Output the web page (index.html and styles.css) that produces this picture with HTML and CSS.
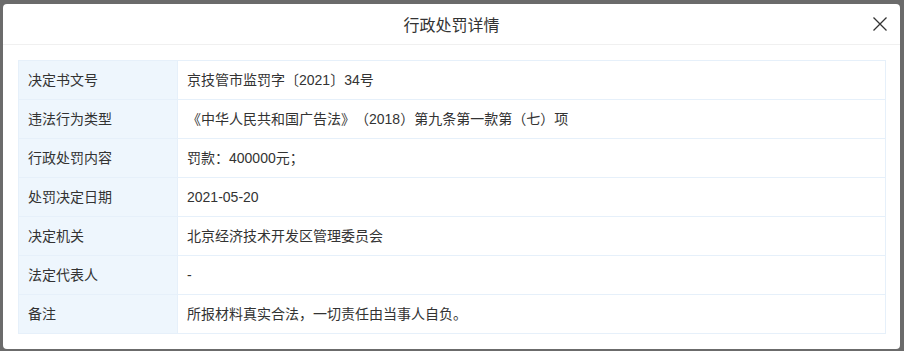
FILE: index.html
```html
<!DOCTYPE html>
<html lang="zh-CN">
<head>
    <meta charset="UTF-8">
    <meta name="viewport" content="width=device-width, initial-scale=1.0">
    <title>行政处罚详情</title>
    <link rel="stylesheet" href="styles.css">
</head>
<body>
    <div class="modal">
        <div class="modal-header">
            <span class="modal-title">行政处罚详情</span>
            <button class="modal-close" aria-label="关闭">
                <svg width="16" height="16" viewBox="0 0 16 16">
                    <path d="M1.5 1.5 L14.5 14.5 M14.5 1.5 L1.5 14.5" stroke="#333" stroke-width="1.3" fill="none"/>
                </svg>
            </button>
        </div>
        <div class="modal-body">
            <table class="detail-table">
                <tr>
                    <td class="label">决定书文号</td>
                    <td>京技管市监罚字〔2021〕34号</td>
                </tr>
                <tr>
                    <td class="label">违法行为类型</td>
                    <td>《中华人民共和国广告法》（2018）第九条第一款第（七）项</td>
                </tr>
                <tr>
                    <td class="label">行政处罚内容</td>
                    <td>罚款：400000元；</td>
                </tr>
                <tr>
                    <td class="label">处罚决定日期</td>
                    <td>2021-05-20</td>
                </tr>
                <tr>
                    <td class="label">决定机关</td>
                    <td>北京经济技术开发区管理委员会</td>
                </tr>
                <tr>
                    <td class="label">法定代表人</td>
                    <td>-</td>
                </tr>
                <tr>
                    <td class="label">备注</td>
                    <td>所报材料真实合法，一切责任由当事人自负。</td>
                </tr>
            </table>
        </div>
    </div>
</body>
</html>
```

FILE: styles.css
```css
body {
    margin: 0;
    padding: 4px 4px 2px 3px;
    background-color: #6b6b6b;
    font-family: "Liberation Sans", "Noto Sans CJK SC", sans-serif;
    color: #333;
    text-spacing-trim: space-all;
}

.modal {
    background: #fff;
    border-radius: 4px;
    overflow: hidden;
}

.modal-header {
    height: 40px;
    border-bottom: 1px solid #f0f0f0;
    display: flex;
    align-items: center;
    justify-content: center;
    position: relative;
}

.modal-title {
    font-size: 16px;
    color: #333;
}

.modal-close {
    position: absolute;
    right: 12px;
    top: 12px;
    width: 16px;
    height: 16px;
    padding: 0;
    border: none;
    background: none;
    cursor: pointer;
}

.modal-close svg {
    display: block;
}

.modal-body {
    padding: 15px 14px 15px 15px;
}

.detail-table {
    width: 100%;
    border-collapse: collapse;
    font-size: 14px;
}

.detail-table td {
    height: 38px;
    padding: 0 9px;
    border: 1px solid #e6f0fa;
    line-height: 1;
}

.detail-table td.label {
    width: 140px;
    background: #eef6fd;
}
```
